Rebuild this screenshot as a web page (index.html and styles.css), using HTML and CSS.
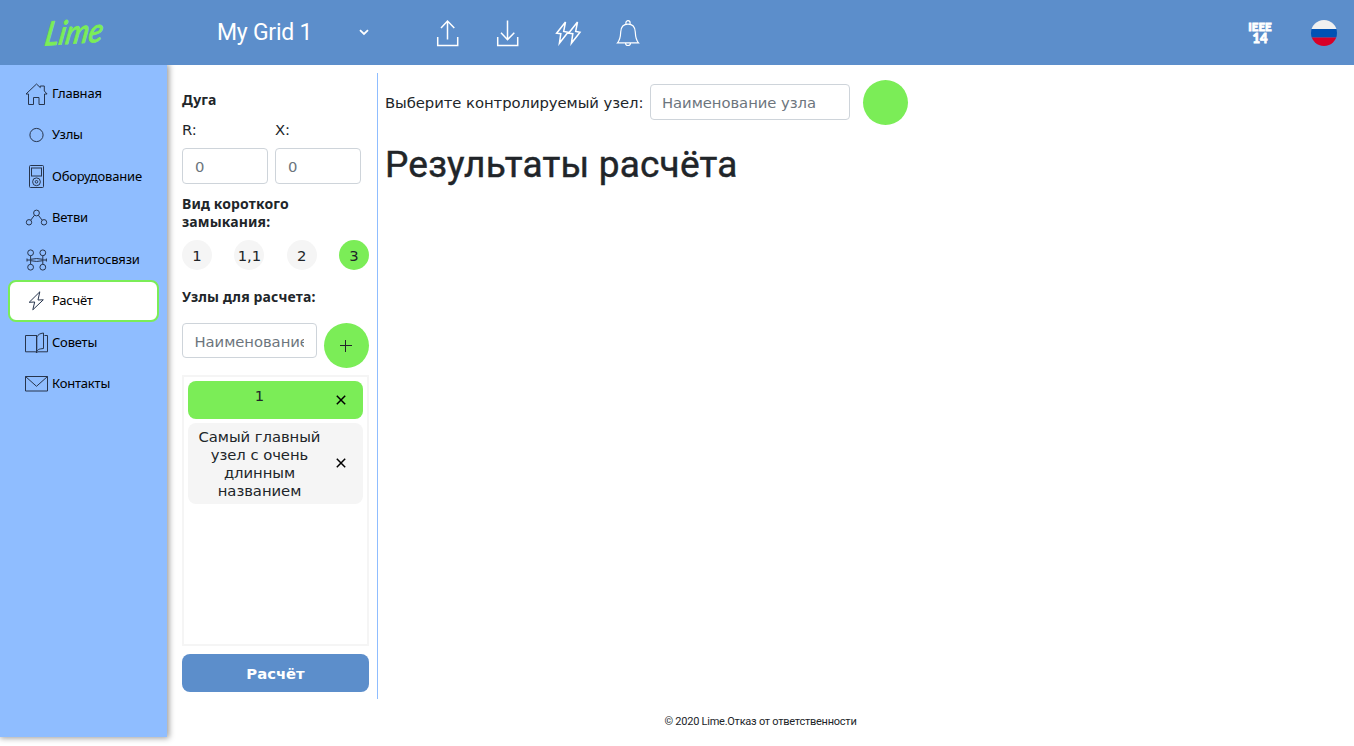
FILE: index.html
```html
<!DOCTYPE html>
<html lang="ru">
<head>
<meta charset="utf-8">
<title>Lime</title>
<link rel="stylesheet" href="styles.css">
</head>
<body>
<header class="header">
  <svg class="logo" width="90" height="60" viewBox="0 0 90 60"><text class="logo-text" x="12" y="42" transform="translate(9 0) rotate(-4 12 42) skewX(-14)" textLength="58" lengthAdjust="spacingAndGlyphs">Lime</text></svg>
  <div class="grid-select"><span class="grid-name">My Grid 1</span>
    <svg width="10" height="7" viewBox="0 0 10 7" fill="none" stroke="#fff" stroke-width="1.8"><path d="M1 1.2 5 5 9 1.2"/></svg>
  </div>
  <nav class="tools">
    <svg width="24" height="28" viewBox="0 0 24 28"><path d="M1.700 18V26.500H21.700V18M11.500 20.500V2M5 9 11.500 2l6.800 7"/></svg>
    <svg width="24" height="28" viewBox="0 0 24 28"><path d="M1.700 18V26.500H21.700V18M11.500 1.500v19M5 13.800 11.500 20.700l6.800-6.900"/></svg>
    <svg width="28" height="28" viewBox="0 0 28 28"><path d="M11.500 3 2.600 14.200 6.800 14.700 5.400 24.300 14 13.200 9.700 12.400zM23.500 3 14.600 14.200 18.800 14.700 17.400 24.300 26 13.200 21.700 12.400z"/></svg>
    <svg class="bell" width="24" height="28" viewBox="0 0 24 28"><path d="M1.500 23.8C4.500 20.500 4.500 17.500 4.700 13 5 8 7.800 5.200 12 5.200s7 2.800 7.300 7.800c.2 4.500.2 7.500 3.200 10.800zM9.900 5.500V3.800a2.100 2.100 0 0 1 4.200 0V5.500M9.500 24a2.500 2.500 0 0 0 5 0"/></svg>
  </nav>
  <div class="ieee"><span>IEEE</span><span class="num">14</span></div>
  <svg class="flag" width="26" height="26" viewBox="0 0 26 26"><defs><clipPath id="flag-disc"><circle cx="13" cy="13" r="13"/></clipPath></defs><g clip-path="url(#flag-disc)"><path fill="#f0f0f0" d="M0 0h26v9H0z"/><path fill="#0052b4" d="M0 9h26v8.500H0z"/><path fill="#d80027" d="M0 17.500h26V26H0z"/></g></svg>
</header>
<div class="body">
  <aside class="sidebar">
    <a class="item"><svg width="24" height="24" viewBox="0 0 24 24"><path d="M4.500 12V22.500H9.500V15.500h5.500v7H20.500V12M4.500 12H2L12.500 2l3.800 3.600V4h4V9l2.800 3H20.500"/></svg><span>Главная</span></a>
    <a class="item"><svg width="24" height="24" viewBox="0 0 24 24"><circle cx="12.500" cy="12" r="6.600"/></svg><span>Узлы</span></a>
    <a class="item"><svg width="24" height="24" viewBox="0 0 24 24"><rect x="5.500" y=".5" width="14" height="22" rx="1"/><rect x="7.500" y="3" width="10" height="8"/><circle cx="12.500" cy="16.800" r="3.900"/><circle cx="12.500" cy="16.800" r="1.300"/></svg><span>Оборудование</span></a>
    <a class="item"><svg width="24" height="24" viewBox="0 0 24 24"><circle cx="12.500" cy="7" r="2.900"/><circle cx="5" cy="16.300" r="2.700"/><circle cx="20" cy="16.300" r="2.700"/><path d="M10.500 9.200 6.700 14.200M14.300 9.200 18.200 14.200"/></svg><span>Ветви</span></a>
    <a class="item"><svg width="24" height="24" viewBox="0 0 24 24"><circle cx="6.600" cy="4.800" r="2.900"/><circle cx="18.800" cy="4.800" r="2.900"/><circle cx="6.600" cy="19.200" r="2.900"/><circle cx="18.800" cy="19.200" r="2.900"/><path d="M6.600 7.700v8.600M18.800 7.700v8.600M3 12h3.600M18.800 12h3.600M3 10.500v3M22.400 10.500v3M6.600 11.300q6-1.500 12.200 0M6.600 12.700q6 1.500 12.200 0"/></svg><span>Магнитосвязи</span></a>
    <a class="item active"><svg width="24" height="24" viewBox="0 0 24 24"><path d="M15.800 2.800 5.200 13.300 10.700 13 8.800 20.800 19.300 10.800 14 11z"/></svg><span>Расчёт</span></a>
    <a class="item"><svg width="24" height="24" viewBox="0 0 24 24"><path d="M13 4.500H1.500v16.300h10.300l.8 1.200.9-1.200h10V4.500H20.500M12.500 4.500V22M12.800 20.500V6c1.500-2.500 2.800-3.500 6.700-4v15.500c-4.500.5-5.500.8-6.700 3"/></svg><span>Советы</span></a>
    <a class="item"><svg width="24" height="24" viewBox="0 0 24 24"><path d="M1.500 4.500h22v14.500h-22zM1.500 4.500l11 9.800L23.500 4.500"/></svg><span>Контакты</span></a>
  </aside>
  <div class="content">
    <div class="workspace">
      <section class="panel">
        <h2 class="title arc">Дуга</h2>
        <div class="fields">
          <label class="field">R:<input class="input" placeholder="0"></label>
          <label class="field">X:<input class="input" placeholder="0"></label>
        </div>
        <h2 class="title kind">Вид короткого<br>замыкания:</h2>
        <div class="kinds"><span class="dot">1</span><span class="dot">1,1</span><span class="dot">2</span><span class="dot chosen">3</span></div>
        <h2 class="title nodes">Узлы для расчета:</h2>
        <div class="add"><input class="input" placeholder="Наименование узла"><button class="round"><svg width="13" height="13" viewBox="0 0 13 13" stroke="#212529"><path d="M5.500 1v12M0 6.500h12"/></svg></button></div>
        <div class="list">
          <div class="row selected"><span class="row-name">1</span><svg class="close" width="10" height="10" viewBox="0 0 10 10"><path d="m.8.8 8.400 8.400M9.200.8.8 9.200"/></svg></div>
          <div class="row"><span class="row-name">Самый главный узел с очень длинным названием</span><svg class="close" width="10" height="10" viewBox="0 0 10 10"><path d="m.8.8 8.400 8.400M9.200.8.8 9.200"/></svg></div>
        </div>
        <button class="calc">Расчёт</button>
      </section>
      <main class="results">
        <div class="watch"><span class="watch-label">Выберите контролируемый узел:</span><input class="input" placeholder="Наименование узла"><button class="round"></button></div>
        <h1 class="heading">Результаты расчёта</h1>
      </main>
    </div>
    <footer class="footer">© 2020 Lime.Отказ от ответственности</footer>
  </div>
</div>
</body>
</html>
```
FILE: styles.css
```css
* { box-sizing: border-box; }
body { margin: 0; height: 746px; overflow: hidden; background: #fff; color: #212529; font: 14.8px/18px Verdana, "DejaVu Sans", sans-serif; letter-spacing: -.05px; }
button { border: 0; padding: 0; font: inherit; }
.header { height: 65px; background: #5c8ecb; display: flex; align-items: center; color: #fff; letter-spacing: 0; }
.logo { margin-left: 33px; }
.logo-text { font: italic 500 33px Lato, sans-serif; fill: #7bed57; stroke: #7bed57; stroke-width: .8px; stroke-linejoin: round; }
.grid-select { display: flex; align-items: center; justify-content: space-between; width: 152px; margin-left: 94px; }
.grid-name { font: 23px/30px Roboto, sans-serif; letter-spacing: -.25px; }
.tools { display: flex; gap: 36px; margin-left: 67px; }
.tools svg { fill: none; stroke: #fff; stroke-width: 1.5; }
.tools svg:nth-child(3) { margin: 0 -2px; }
.tools .bell { stroke-width: 1.2; }
.ieee { margin-left: auto; width: 24px; display: flex; flex-direction: column; align-items: center; font: 900 11.5px/12px Lato, sans-serif; -webkit-text-stroke: .8px #fff; }
.ieee .num { font-size: 13px; margin-top: -1px; }
.flag { margin: 1px 17px 0 39px; }
.body { display: flex; height: 681px; }
.sidebar { width: 167px; height: 672px; padding: 8px 8px 0; background: #8fbdff; box-shadow: 1px 0 6px 1px rgba(0,0,0,.4); display: flex; flex-direction: column; clip-path: inset(0 -12px -8px 0); }
.item { height: 41.480px; border: 2px solid transparent; border-radius: 8px; padding-left: 14px; display: flex; align-items: center; gap: 4px; color: #000; font: 13px/18px "Noto Sans", sans-serif; letter-spacing: -.2px; white-space: nowrap; }
.item span { padding-bottom: 1.500px; }
.item svg { flex: none; fill: none; stroke: #27354d; stroke-width: 1; }
.item.active { background: #fff; border-color: #7bed57; }
.content { flex: 1; display: flex; flex-direction: column; padding: 8px 0 0 15px; }
.workspace { display: flex; height: 626px; }
.panel { width: 196px; padding-right: 8px; border-right: 1px solid #8fbdff; }
.title { margin: 0; font: 700 14px/18px "Noto Sans", sans-serif; letter-spacing: .13px; }
.arc { padding-top: 18px; letter-spacing: 0; }
.fields { display: flex; gap: 7px; margin-top: 12px; }
.field { width: 86px; }
.field .input { margin-top: 9px; padding: 1px 12px 0; }
.input { display: block; width: 100%; height: 36px; border: 1px solid #ced4da; border-radius: 4px; padding: 2px 12px 0 11px; background: #fff; color: #495057; font: 14.8px/22px Verdana, "DejaVu Sans", sans-serif; letter-spacing: -.05px; }
.input::placeholder { color: #6c757d; opacity: 1; }
.kind { margin-top: 11px; }
.kinds { display: flex; justify-content: space-between; margin-top: 9px; }
.dot { width: 30px; height: 30px; padding-top: 2px; border-radius: 50%; background: #f5f5f5; display: flex; align-items: center; justify-content: center; }
.dot.chosen { background: #7bed57; }
.nodes { margin-top: 18px; }
.add { display: flex; gap: 7px; margin-top: 17px; }
.add .input { height: 35px; padding-left: 11.500px; }
.round { flex: none; width: 45px; height: 45px; border-radius: 50%; background: #7bed57; display: flex; align-items: center; justify-content: center; }
.list { height: 271px; margin-top: 7px; border: 2px solid #f5f5f5; padding: 4px; display: flex; flex-direction: column; gap: 4px; }
.row { display: flex; align-items: center; background: #f5f5f5; border-radius: 8px; padding: 5px 17.500px 4px 8.500px; }
.row.selected { height: 38px; background: #7bed57; }
.row-name { flex: none; width: 126px; text-align: center; }
.row.selected .row-name { align-self: flex-start; padding-top: 1px; }
.close { margin: 0 0 2px auto; fill: none; stroke: #000; stroke-width: 1.5; }
.calc { width: 100%; height: 38px; margin-top: 8px; padding-top: 2px; border-radius: 8px; background: #5c8ecb; color: #fff; font-weight: 700; }
.results { padding: 7px 0 0 7px; }
.watch { display: flex; align-items: center; }
.watch-label { width: 265px; white-space: nowrap; }
.watch .input { width: 200px; margin: 0 13px 2px 0; }
.heading { margin: 18px 0 0; font: 400 37px/44px Roboto, sans-serif; letter-spacing: .2px; -webkit-text-stroke: .45px #212529; }
.footer { margin-top: 14px; padding-right: 15px; text-align: center; font: 11px/18px Roboto, sans-serif; letter-spacing: -.25px; }
```
